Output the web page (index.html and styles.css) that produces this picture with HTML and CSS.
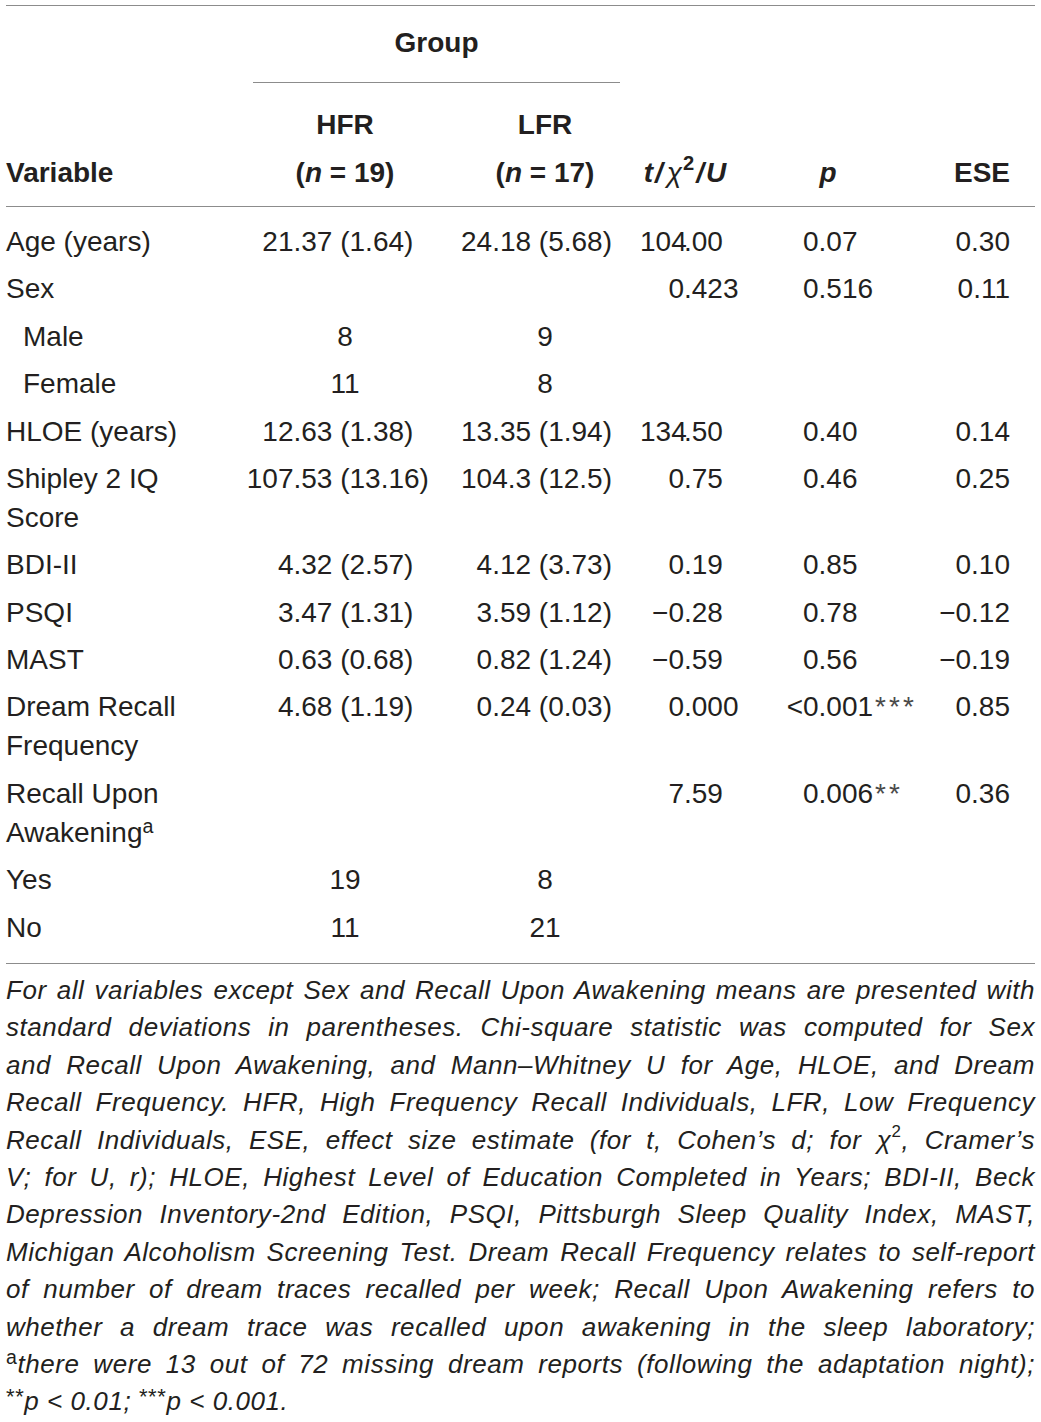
FILE: index.html
```html
<!DOCTYPE html>
<html lang="en">
<head>
<meta charset="utf-8">
<title>Table</title>
<link rel="stylesheet" href="styles.css">
</head>
<body>
<div class="page">
<table class="tbl">
  <colgroup>
    <col class="w1"><col class="w2"><col class="w3"><col class="w4"><col class="w5"><col class="w6">
  </colgroup>
  <thead>
    <tr class="grp-row">
      <th></th>
      <th colspan="2" class="grp"><div class="grp-label">Group</div></th>
      <th></th><th></th><th></th>
    </tr>
    <tr class="head-row">
      <th class="h-var">Variable</th>
      <th class="h-mid">HFR<br>(<i>n</i> = 19)</th>
      <th class="h-mid">LFR<br>(<i>n</i> = 17)</th>
      <th class="h-mid"><i>t</i><span class="sl">/</span><span class="chi">χ</span><sup>2</sup><span class="sl">/</span><i>U</i></th>
      <th class="h-mid"><i>p</i></th>
      <th class="h-ese">ESE</th>
    </tr>
  </thead>
  <tbody>
    <tr>
      <td class="var">Age (years)</td>
      <td class="hfr"><span class="i">21</span>.37 (1.64)</td>
      <td class="lfr">24.18 (5.68)</td>
      <td class="stat"><span class="i">104</span>.00</td>
      <td class="pv"><span class="i">0</span>.07</td>
      <td class="ese">0.30</td>
    </tr>
    <tr>
      <td class="var">Sex</td>
      <td></td>
      <td></td>
      <td class="stat"><span class="i">0</span>.423</td>
      <td class="pv"><span class="i">0</span>.516</td>
      <td class="ese">0.11</td>
    </tr>
    <tr>
      <td class="var sub">Male</td>
      <td class="mid">8</td>
      <td class="mid">9</td>
      <td></td><td></td><td></td>
    </tr>
    <tr>
      <td class="var sub">Female</td>
      <td class="mid">11</td>
      <td class="mid">8</td>
      <td></td><td></td><td></td>
    </tr>
    <tr>
      <td class="var">HLOE (years)</td>
      <td class="hfr"><span class="i">12</span>.63 (1.38)</td>
      <td class="lfr">13.35 (1.94)</td>
      <td class="stat"><span class="i">134</span>.50</td>
      <td class="pv"><span class="i">0</span>.40</td>
      <td class="ese">0.14</td>
    </tr>
    <tr>
      <td class="var">Shipley 2 IQ Score</td>
      <td class="hfr"><span class="i">107</span>.53 (13.16)</td>
      <td class="lfr">104.3 (12.5)</td>
      <td class="stat"><span class="i">0</span>.75</td>
      <td class="pv"><span class="i">0</span>.46</td>
      <td class="ese">0.25</td>
    </tr>
    <tr>
      <td class="var">BDI-II</td>
      <td class="hfr"><span class="i">4</span>.32 (2.57)</td>
      <td class="lfr">4.12 (3.73)</td>
      <td class="stat"><span class="i">0</span>.19</td>
      <td class="pv"><span class="i">0</span>.85</td>
      <td class="ese">0.10</td>
    </tr>
    <tr>
      <td class="var">PSQI</td>
      <td class="hfr"><span class="i">3</span>.47 (1.31)</td>
      <td class="lfr">3.59 (1.12)</td>
      <td class="stat"><span class="i">−0</span>.28</td>
      <td class="pv"><span class="i">0</span>.78</td>
      <td class="ese">−0.12</td>
    </tr>
    <tr>
      <td class="var">MAST</td>
      <td class="hfr"><span class="i">0</span>.63 (0.68)</td>
      <td class="lfr">0.82 (1.24)</td>
      <td class="stat"><span class="i">−0</span>.59</td>
      <td class="pv"><span class="i">0</span>.56</td>
      <td class="ese">−0.19</td>
    </tr>
    <tr>
      <td class="var">Dream Recall Frequency</td>
      <td class="hfr"><span class="i">4</span>.68 (1.19)</td>
      <td class="lfr">0.24 (0.03)</td>
      <td class="stat"><span class="i">0</span>.000</td>
      <td class="pv"><span class="i">&lt;0</span>.001<span class="ast">***</span></td>
      <td class="ese">0.85</td>
    </tr>
    <tr>
      <td class="var">Recall Upon Awakening<sup class="fn">a</sup></td>
      <td></td>
      <td></td>
      <td class="stat"><span class="i">7</span>.59</td>
      <td class="pv"><span class="i">0</span>.006<span class="ast">**</span></td>
      <td class="ese">0.36</td>
    </tr>
    <tr>
      <td class="var">Yes</td>
      <td class="mid">19</td>
      <td class="mid">8</td>
      <td></td><td></td><td></td>
    </tr>
    <tr>
      <td class="var">No</td>
      <td class="mid">11</td>
      <td class="mid">21</td>
      <td></td><td></td><td></td>
    </tr>
  </tbody>
</table>
<p class="note">
  <span class="ln">For all variables except Sex and Recall Upon Awakening means are presented with</span>
  <span class="ln">standard deviations in parentheses. Chi-square statistic was computed for Sex</span>
  <span class="ln">and Recall Upon Awakening, and Mann–Whitney U for Age, HLOE, and Dream</span>
  <span class="ln">Recall Frequency. HFR, High Frequency Recall Individuals, LFR, Low Frequency</span>
  <span class="ln">Recall Individuals, ESE, effect size estimate (for t, Cohen’s d; for χ<sup class="sq">2</sup>, Cramer’s</span>
  <span class="ln">V; for U, r); HLOE, Highest Level of Education Completed in Years; BDI-II, Beck</span>
  <span class="ln">Depression Inventory-2nd Edition, PSQI, Pittsburgh Sleep Quality Index, MAST,</span>
  <span class="ln">Michigan Alcoholism Screening Test. Dream Recall Frequency relates to self-report</span>
  <span class="ln">of number of dream traces recalled per week; Recall Upon Awakening refers to</span>
  <span class="ln">whether a dream trace was recalled upon awakening in the sleep laboratory;</span>
  <span class="ln"><sup class="up">a</sup>there were 13 out of 72 missing dream reports (following the adaptation night);</span>
  <span class="ln"><sup class="ast2">**</sup>p &lt; 0.01; <sup class="ast2">***</sup>p &lt; 0.001.</span>
</p>
</div>
</body>
</html>
```

FILE: styles.css
```css
html, body {
  margin: 0;
  padding: 0;
  background: #ffffff;
}

.page {
  padding: 5px 6px 0 6px;
  font-family: "Liberation Sans", Arial, sans-serif;
  color: #231f20;
}

.tbl {
  width: 1029px;
  table-layout: fixed;
  border-collapse: collapse;
  border-top: 1px solid #8c8c8c;
  border-bottom: 1px solid #8c8c8c;
  font-size: 28px;
}

.w1 { width: 234px; }
.w2 { width: 210px; }
.w3 { width: 190px; }
.w4 { width: 90px; }
.w5 { width: 196px; }
.w6 { width: 109px; }

.tbl th {
  font-weight: bold;
  line-height: 48px;
  padding: 0;
  vertical-align: bottom;
  white-space: nowrap;
}

.grp-row th {
  padding-top: 13px;
}

.grp-label {
  margin: 0 20px 0 13px;
  padding-bottom: 15px;
  border-bottom: 1px solid #8c8c8c;
  text-align: center;
}

.head-row th {
  padding-top: 18px;
  padding-bottom: 9px;
  border-bottom: 1px solid #8c8c8c;
}

.h-var { text-align: left; }
.h-mid { text-align: center; }
.h-ese { text-align: right; padding-right: 25px !important; }

.sl {
  font-style: italic;
  margin: 0 2px;
}

.chi {
  font-weight: normal;
  font-style: italic;
  margin-left: 2px;
}

.tbl th sup {
  font-size: 0.72em;
  line-height: 0;
  vertical-align: 0.6em;
  margin-left: 1px;
}

.tbl td {
  font-weight: normal;
  line-height: 39px;
  padding: 4.2px 0;
  vertical-align: top;
  white-space: nowrap;
}

.tbl tbody tr:first-child td { padding-top: 15px; }
.tbl tbody tr:last-child td { padding-bottom: 16.5px; }

.tbl td.var {
  white-space: normal;
  padding-right: 34px;
  text-align: left;
}

.tbl td.sub { padding-left: 17px; }

.tbl td.mid { text-align: center; }

.tbl td .i {
  display: inline-block;
  text-align: right;
}

.tbl td.hfr { text-align: left; }
.tbl td.hfr .i { width: 53.5px; }

.tbl td.lfr { text-align: right; padding-right: 28px; }

.tbl td.stat { text-align: left; }
.tbl td.stat .i { width: 44px; }

.tbl td.pv { text-align: left; }
.tbl td.pv .i { width: 88.6px; }

.tbl td.ese { text-align: right; padding-right: 25px; }

.ast {
  letter-spacing: 3px;
  margin-left: 2px;
  color: #4a4a4a;
}

.fn {
  font-size: 0.7em;
  line-height: 0;
  vertical-align: 0.45em;
}

.note {
  margin: 8px 0 0 0;
  font-size: 26px;
  font-style: italic;
  line-height: 37.4px;
  letter-spacing: 0.55px;
}

.note .ln {
  display: block;
  text-align: justify;
  text-align-last: justify;
}

.note .ln:last-child {
  text-align-last: left;
}

.note sup {
  line-height: 0;
}

.sq {
  font-size: 0.65em;
  vertical-align: 0.7em;
  font-style: normal;
}

.up {
  font-style: normal;
  font-size: 0.75em;
  vertical-align: 0.45em;
}

.ast2 {
  font-style: normal;
  font-size: 0.85em;
  vertical-align: 0.25em;
}
```
